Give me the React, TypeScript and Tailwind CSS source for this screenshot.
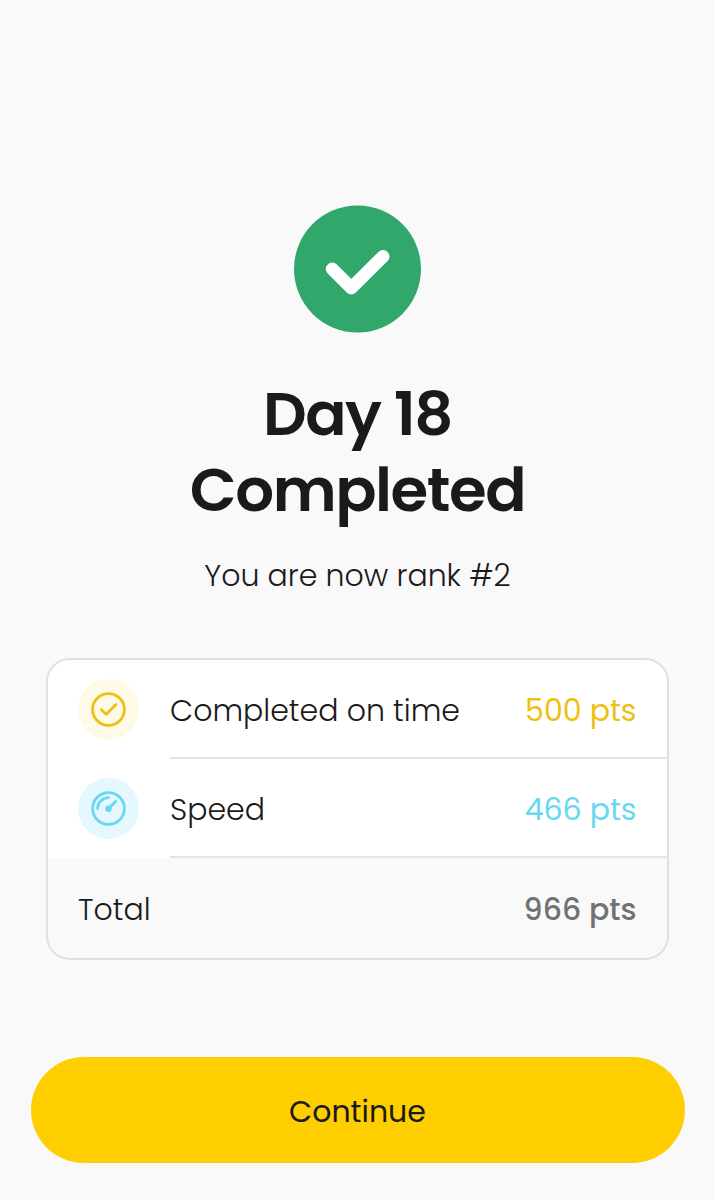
import type { ReactNode } from "react";

interface ScoreRowProps {
  icon: ReactNode;
  label: ReactNode;
  points: ReactNode;
}

const CheckBadge = () => {
  return (
    <svg className="h-[128px] w-[127px]" viewBox="0 0 127 128" fill="none">
      <circle cx="63.5" cy="64" r="63.5" fill="#31A76C" />
      <path
        d="M38.3 64 L57.3 83 L89 51.5"
        stroke="#fff"
        strokeWidth="13"
        strokeLinecap="round"
        strokeLinejoin="round"
      />
    </svg>
  );
};

const OnTimeIcon = () => {
  return (
    <svg className="h-[61px] w-[61px]" viewBox="0 0 61 61" fill="none">
      <circle cx="30.5" cy="30.5" r="30.5" fill="#FFFAE8" />
      <g stroke="#EDC012" strokeWidth="2.8" strokeLinecap="round" strokeLinejoin="round">
        <circle cx="30.5" cy="30.5" r="15.9" />
        <path d="M23.3 30.7 L28.2 35.2 L38 25.5" />
      </g>
    </svg>
  );
};

const SpeedIcon = () => {
  return (
    <svg className="h-[61px] w-[61px]" viewBox="0 0 61 61" fill="none">
      <circle cx="30.5" cy="30.5" r="30.5" fill="#E6F8FF" />
      <g stroke="#66D9F0" strokeWidth="2.8" strokeLinecap="round">
        <circle cx="30.5" cy="30.5" r="15.9" />
        <path d="M19.6 30.5 A11 11 0 0 1 30.7 19.6" />
        <path d="M31.5 29.5 L37.7 23.5" />
      </g>
      <circle cx="30.5" cy="30.7" r="3.2" fill="#66D9F0" />
    </svg>
  );
};

const ScoreRow = ({ icon, label, points }: ScoreRowProps) => {
  return (
    <div className="flex h-[99px] bg-white pl-[30px]">
      <div className="flex w-[92px] items-center">{icon}</div>
      <div className="flex flex-1 items-center justify-between border-b-2 border-[#E4E4E4] pr-[30.5px] pt-1">
        {label}
        {points}
      </div>
    </div>
  );
};

const App = () => {
  return (
    <main className="flex h-[1200px] w-full flex-col items-center bg-[#F9F9F9] px-[30.5px] pt-[205px] font-['Poppins','Inter',sans-serif] text-[30px] leading-[48px] text-[#1A1A1A]">
      <CheckBadge />
      <h1 className="mt-[43px] text-center text-[61px] font-semibold leading-[76px] tracking-[-1.45px]">
        Day 18
        <br />
        Completed
      </h1>
      <p className="mt-[24px] font-light">You are now rank #2</p>
      <section className="mt-[58px] h-[302px] w-[623px] overflow-hidden rounded-[24px] border-2 border-[#E0E0E0]">
        <ScoreRow
          icon={<OnTimeIcon />}
          label={<span className="font-light">Completed on time</span>}
          points={<span className="text-[#EDC012]">500 pts</span>}
        />
        <ScoreRow
          icon={<SpeedIcon />}
          label={<span className="font-light">Speed</span>}
          points={<span className="text-[#66D9F0]">466 pts</span>}
        />
        <div className="flex h-[100px] items-center justify-between pl-[30px] pr-[30.5px] pt-1">
          <span className="font-light">Total</span>
          <span className="font-medium text-[#727272]">966 pts</span>
        </div>
      </section>
      <button className="mt-[97px] h-[106px] w-full rounded-full bg-[#FFCE00] pt-1">
        <span>Continue</span>
      </button>
    </main>
  );
};

export default App;
